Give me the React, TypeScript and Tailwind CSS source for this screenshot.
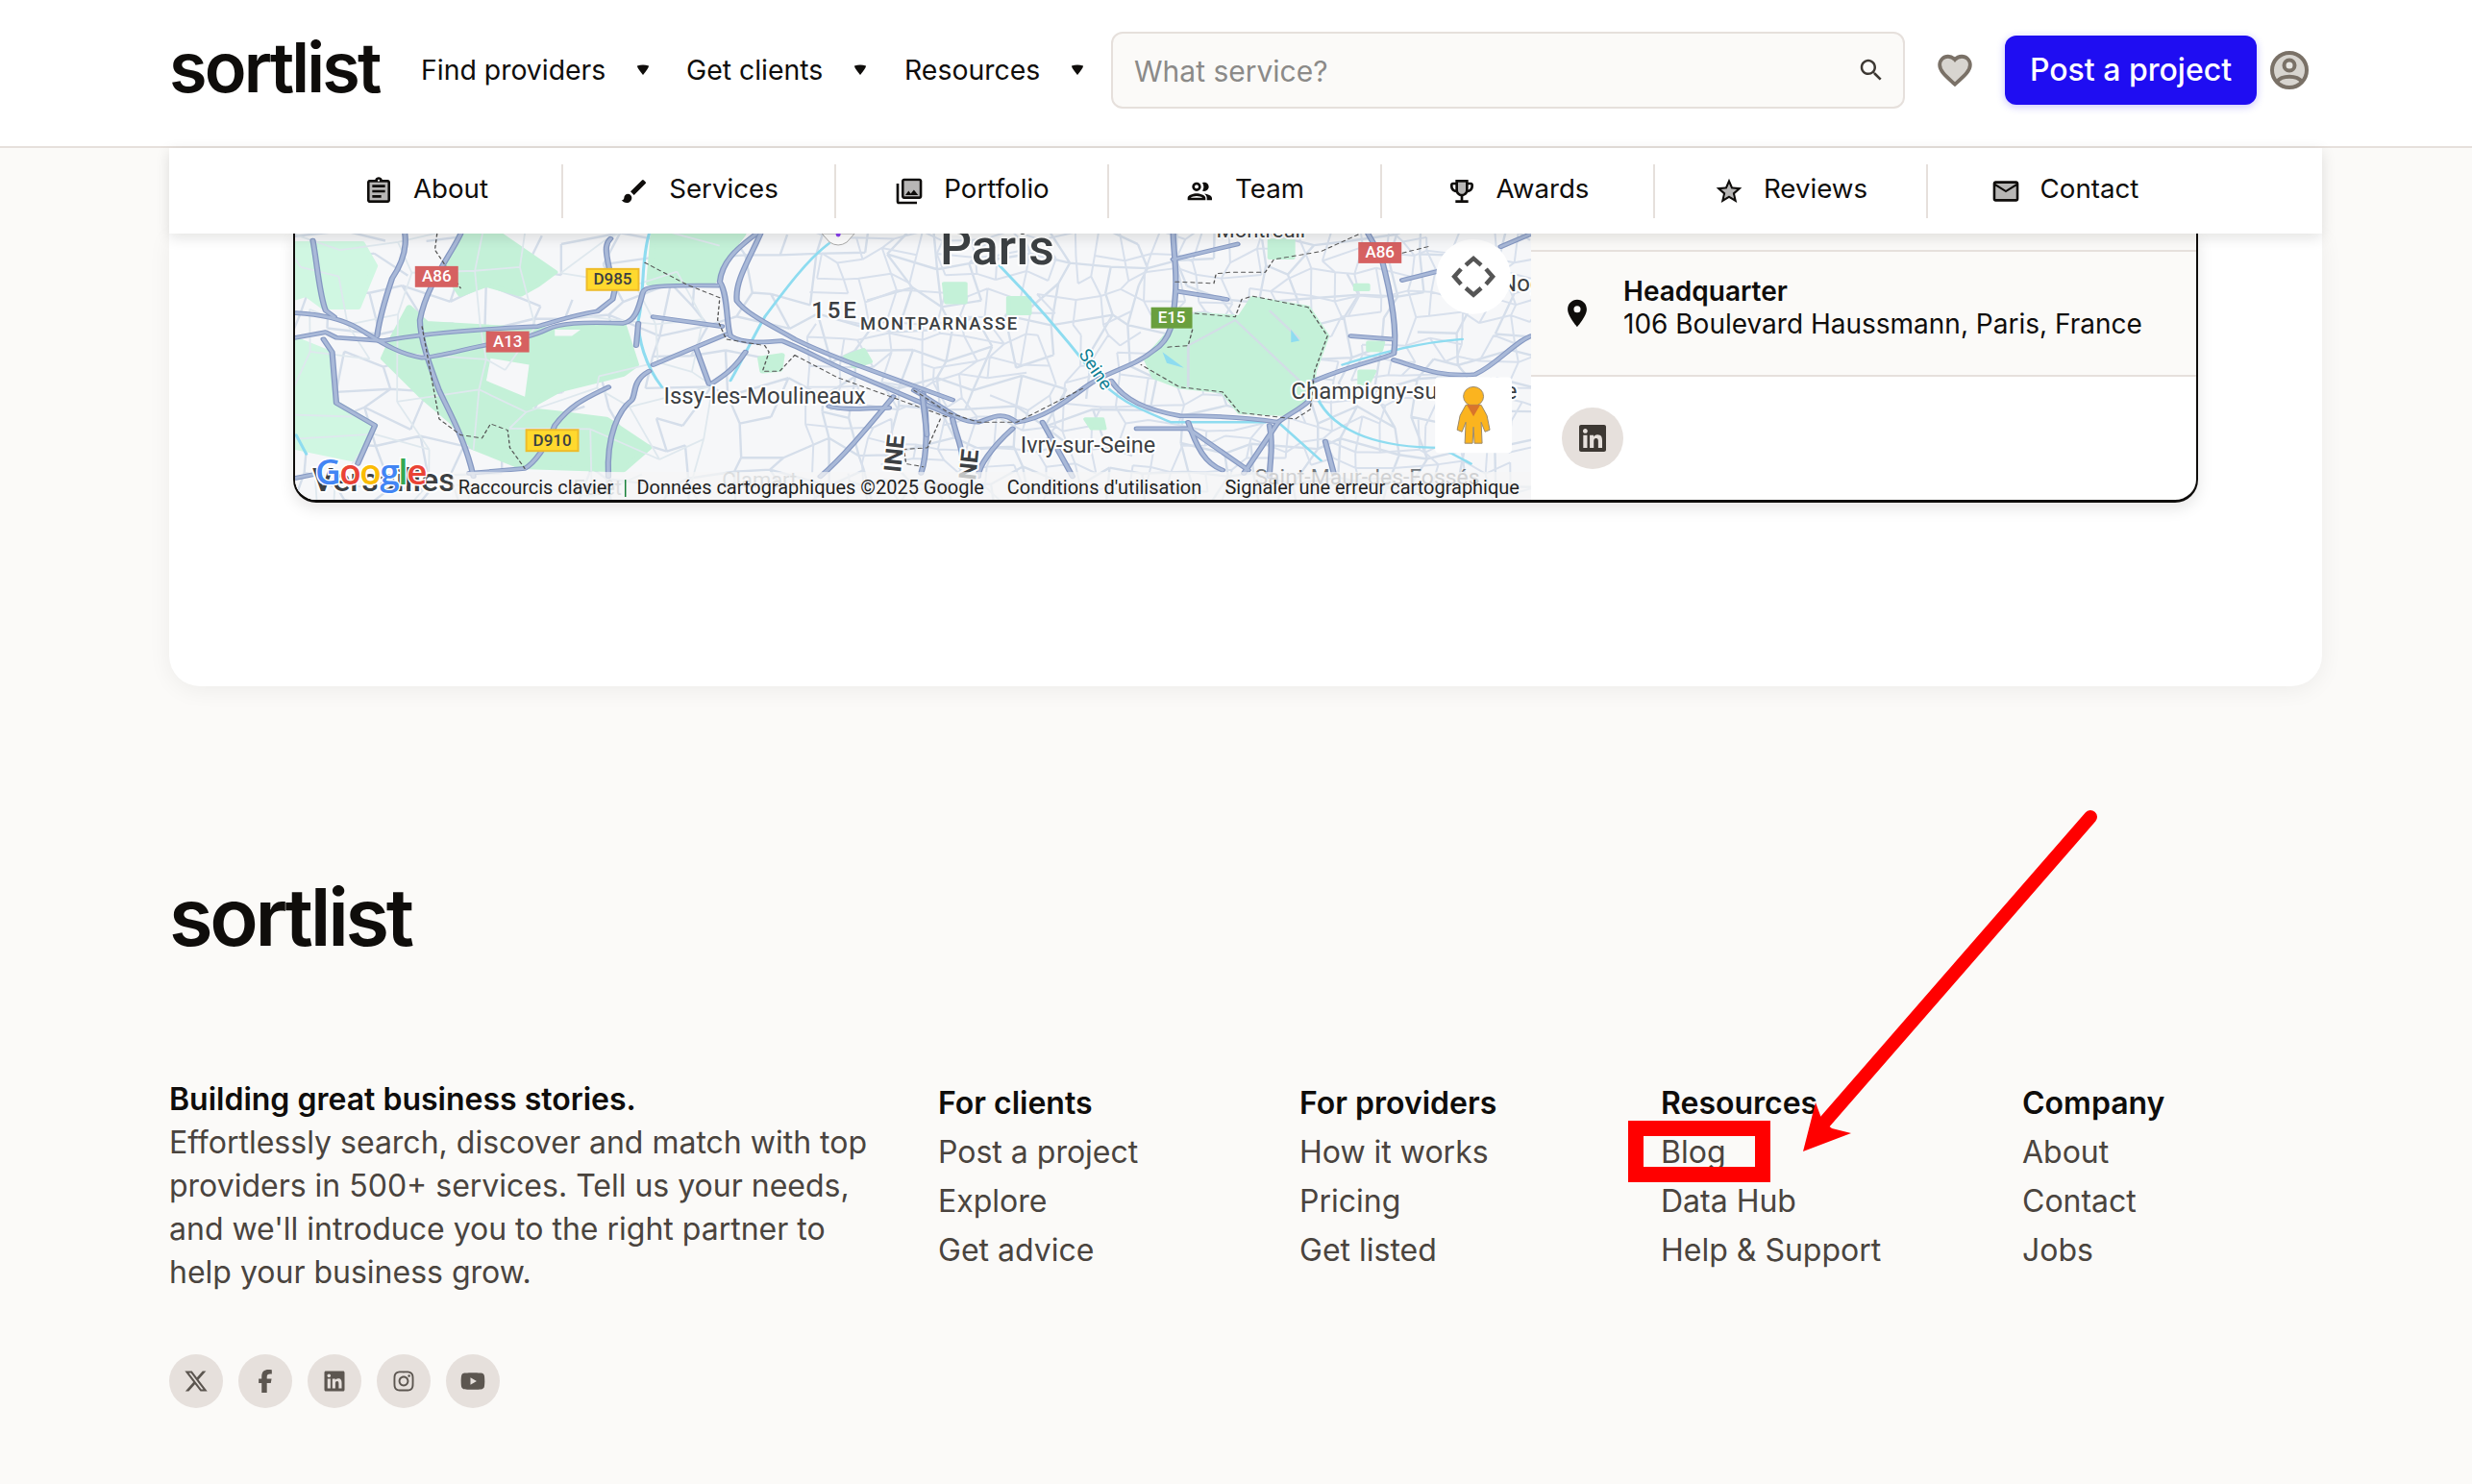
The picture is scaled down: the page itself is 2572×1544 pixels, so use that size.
import { FaFacebookF, FaInstagram, FaLinkedin, FaXTwitter, FaYoutube } from "react-icons/fa6";

const font = "font-['Inter',sans-serif]";

// minor street mesh of the map, jittered grid with a fixed seed
function streets(x0: number, x1: number, y0: number, y1: number, cw: number, ch: number, seed: number) {
  let s = seed;
  const rnd = () => {
    s = (s * 16807) % 2147483647;
    return s / 2147483647;
  };
  const cols = Math.ceil((x1 - x0) / cw);
  const rows = Math.ceil((y1 - y0) / ch);
  const pts: number[][][] = [];
  for (let c = 0; c <= cols; c++) {
    pts.push([]);
    for (let r = 0; r <= rows; r++) {
      pts[c].push([x0 + c * cw + (rnd() - 0.5) * cw * 0.8, y0 + r * ch + (rnd() - 0.5) * ch * 0.8]);
    }
  }
  let d = "";
  for (let c = 0; c <= cols; c++) {
    for (let r = 0; r <= rows; r++) {
      const p = pts[c][r];
      if (c < cols && rnd() > 0.22) d += `M${p[0].toFixed(1)},${p[1].toFixed(1)}L${pts[c + 1][r][0].toFixed(1)},${pts[c + 1][r][1].toFixed(1)}`;
      if (r < rows && rnd() > 0.28) d += `M${p[0].toFixed(1)},${p[1].toFixed(1)}L${pts[c][r + 1][0].toFixed(1)},${pts[c][r + 1][1].toFixed(1)}`;
    }
  }
  return d;
}

const minorWide = streets(0, 1288, 0, 278, 42, 32, 4711);
const minorDense = streets(540, 1290, 0, 278, 27, 22, 921);
const minorPark = streets(0, 380, 0, 278, 60, 44, 2207);

const westHighways = [
  "M35,258 C90,262 140,275 180,305 C230,345 270,385 330,398 C370,395 430,370 490,355 C540,345 590,330 620,310 C650,290 700,285 800,290 C825,285 835,250 845,195 C850,175 870,170 1020,172",
  "M35,335 L105,318 L130,335 L240,345 C300,330 400,312 600,300 C640,285 680,265 740,252 L775,215 L780,185",
  "M420,10 C400,70 340,170 325,280 C325,340 350,430 370,500 C390,560 430,650 450,770",
  "M75,30 C85,100 90,200 105,250 L125,270",
  "M100,340 L120,380 L130,540 L220,610 L180,730",
  "M1110,10 C1060,60 1030,100 1025,160 C1045,200 1040,300 1050,330 C1080,355 1130,350 1170,345 C1220,370 1270,410 1340,450 L1568,580",
  "M1120,10 C1090,100 1060,160 1065,220 C1090,265 1150,300 1200,340 C1260,380 1320,410 1568,530",
  "M870,270 L1030,300",
  "M870,420 L1040,325",
  "M970,370 L1000,480",
  "M1085,380 C1060,430 1040,450 1005,480",
  "M765,490 C720,520 680,540 640,610 C620,680 590,730 570,745 L440,760",
  "M860,440 C820,470 830,510 820,530 C790,560 760,640 765,770",
  "M1430,520 C1380,600 1320,700 1260,770",
  "M1500,510 C1510,600 1510,700 1495,760",
  "M1280,550 C1320,565 1370,555 1420,555",
  "M35,775 L90,760",
  "M835,290 L830,360",
  "M770,25 C750,50 765,90 775,175",
  "M290,10 C295,60 280,110 260,150 C240,230 230,280 225,330",
];

const eastHighways = [
  "M605,10 C605,60 615,130 610,200 C605,290 600,340 560,375 C510,430 450,440 400,490 C350,540 300,590 240,600 C200,560 180,590 150,600 C100,600 80,560 0,500",
  "M605,90 L755,42",
  "M615,190 L730,215",
  "M460,470 C490,530 540,560 620,580 C700,580 780,585 850,600 C880,570 900,560 920,535",
  "M520,620 L640,620 L780,750",
  "M640,600 C660,680 680,730 720,750",
  "M830,610 C840,680 830,720 830,770",
  "M850,600 L770,760",
  "M1090,80 C1110,180 1130,300 1120,385 C1100,400 1020,420 935,470",
  "M1120,405 C1180,430 1230,460 1310,450 C1360,420 1400,350 1440,330",
  "M1020,330 L1115,340",
  "M1140,155 L1230,125",
  "M1090,80 L1060,10",
  "M1370,50 L1440,10",
  "M960,660 L980,760",
  "M90,590 C100,650 120,700 110,740",
  "M230,620 C180,680 150,740 150,770",
  "M20,520 L30,640",
  "M300,600 L370,770",
];

function RoadBadge({ x, y, w, label, fill, color, border }: { x: number; y: number; w: number; label: string; fill: string; color: string; border?: string }) {
  return (
    <g>
      <rect x={x} y={y} width={w} height={22} fill={fill} stroke={border} strokeWidth={border ? 2 : 0} />
      <text x={x + w / 2} y={y + 16.5} textAnchor="middle" fontFamily="Roboto, sans-serif" fontSize="17" fontWeight="500" fill={color}>
        {label}
      </text>
    </g>
  );
}

function MapLabel({ x, y, size, children, weight = 400, fill = "#3c4043", spacing = 0 }: { x: number; y: number; size: number; children: string; weight?: number; fill?: string; spacing?: number }) {
  return (
    <text x={x} y={y} fontFamily="Roboto, sans-serif" fontSize={size} fontWeight={weight} fill={fill} letterSpacing={spacing} stroke="#ffffff" strokeWidth="4" strokeLinejoin="round" paintOrder="stroke">
      {children}
    </text>
  );
}

function MapDrawing() {
  return (
    <svg viewBox="0 0 1288 278" className="block h-full w-full" preserveAspectRatio="none">
      <rect width="1288" height="278" fill="#f6f7f9" />
      <path d={minorWide} fill="none" stroke="#d5deea" strokeWidth="2.4" />
      <path d={minorDense} fill="none" stroke="#d8e0ec" strokeWidth="2" />

      <g transform="translate(-15,-3) scale(0.4464,0.3333)">
        <g fill="#c4f1d8" stroke="#c4f1d8" strokeWidth="14" strokeLinejoin="round">
          <path fill="#d0f7e2" stroke="#d0f7e2" d="M36,40 L190,40 L220,110 L180,240 L100,240 L60,200 L36,210Z" />
          <path fill="#d0f7e2" stroke="#d0f7e2" d="M36,340 L110,380 L130,540 L220,610 L180,720 L36,680Z" />
          <path d="M420,10 L510,10 L640,130 L600,170 L560,200 L480,170 L420,200 L380,120Z" />
          <path d="M870,10 L1080,10 L1030,100 L1010,160 L860,165Z" />
          <path d="M300,240 L340,290 L600,310 L700,300 L800,295 L830,420 L800,450 L650,500 L570,560 L640,570 L760,590 L860,680 L800,750 L560,740 L450,680 L400,600 L330,520 L240,400 L260,340Z" />
          <path fill="#f6f7f9" stroke="none" d="M490,400 L580,420 L570,520 L480,470Z" />
          <path fill="#f6f7f9" stroke="none" d="M640,310 L700,310 L680,330 L640,330Z" />
          <path d="M1120,400 L1170,390 L1165,435 L1125,440Z" />
          <path d="M1320,395 L1360,375 L1375,410 L1340,425Z" />
        </g>
      </g>
      <path d={minorPark} fill="none" stroke="#dfe8ee" strokeWidth="1.8" />

      <g transform="translate(-15,-3) scale(0.4464,0.3333)">
        <g fill="none" stroke="#8edcf0" strokeWidth="7" strokeLinecap="round">
          <path d="M860,10 C840,100 850,200 835,280 C835,340 850,420 890,490" />
          <path d="M1280,40 C1230,90 1180,180 1130,270 C1100,340 1080,400 1050,470" />
          <path d="M36,640 L60,700" />
        </g>
        <g fill="none" strokeLinejoin="round" strokeLinecap="round">
          <g stroke="#8598c2">
            {westHighways.map((d) => (
              <path key={d} d={d} strokeWidth="14" />
            ))}
          </g>
          <g stroke="#a9b9d8">
            {westHighways.map((d) => (
              <path key={d} d={d} strokeWidth="8" />
            ))}
          </g>
          <g stroke="#555555" strokeWidth="3" strokeDasharray="9 9">
            <path d="M365,10 L360,60 L420,180" />
            <path d="M850,100 L950,170 L1025,210 L1020,280 L1040,340 L1130,360 L1140,380 L1125,440 L1165,440 L1200,390" />
            <path d="M330,300 L370,590 L420,640 L470,650 L490,605 L530,625 L535,680 L570,745" />
            <path d="M1200,390 L1300,460 L1568,590" />
            <path d="M1540,590 L1510,680 L1455,685 L1460,730 L1500,740" />
          </g>
        </g>
      </g>

      <g transform="translate(645,-3) scale(0.4464,0.3333)">
        <g fill="#c4f1d8" stroke="#c4f1d8" strokeWidth="10" strokeLinejoin="round">
          <path d="M540,400 L600,310 L660,260 L760,270 L790,210 L920,240 L965,330 L935,440 L925,530 L860,575 L760,570 L720,505 L620,490 L560,460Z" />
          <path d="M70,165 L120,165 L120,225 L75,225Z" />
          <path d="M220,210 L270,210 L270,260 L220,260Z" />
          <path d="M830,30 L885,30 L885,85 L830,85Z" />
          <path d="M1030,170 L1060,170 L1060,185 L1030,185Z" />
          <path d="M1060,350 L1095,350 L1090,375 L1060,375Z" />
          <path d="M1040,440 L1075,440 L1060,480 L1040,480Z" />
          <path d="M400,590 L440,590 L445,620 L415,620Z" />
        </g>
        <g fill="none" stroke="#d3dde6" strokeWidth="6">
          <path d="M640,360 L640,490" />
          <path d="M640,360 L750,280 L900,470" />
          <path d="M830,250 L900,340" />
        </g>
        <g fill="none" stroke="#8edcf0" strokeWidth="7" strokeLinecap="round">
          <path d="M200,110 C280,220 350,330 420,450 C480,540 530,560 600,600 L820,600" />
          <path d="M850,600 L950,720" />
          <path d="M940,520 C980,640 1100,680 1230,680 L1300,730" />
          <path d="M1000,420 C1100,380 1180,350 1280,340" />
        </g>
        <path d="M880,310 L900,345 L880,350Z" fill="#8edcf0" />
        <path d="M580,380 L630,430 L590,415Z" fill="#8edcf0" />
        <g fill="none" strokeLinejoin="round" strokeLinecap="round">
          <g stroke="#8598c2">
            {eastHighways.map((d) => (
              <path key={d} d={d} strokeWidth="14" />
            ))}
          </g>
          <g stroke="#a9b9d8">
            {eastHighways.map((d) => (
              <path key={d} d={d} strokeWidth="8" />
            ))}
          </g>
          <g stroke="#555555" strokeWidth="3" strokeDasharray="9 9">
            <path d="M610,160 L700,165 L705,135 L740,130 L820,130 L840,90 L950,65 L1040,10" />
            <path d="M620,255 L750,270 L765,215 L790,205 L920,240 L965,330 L935,440 L925,560 L890,590 L760,570 L720,505 L620,490 L530,420" />
            <path d="M650,310 L640,360 L590,365" />
            <path d="M1200,50 L1140,70" />
            <path d="M0,500 L80,570 L150,600 L240,600 L400,490" />
          </g>
        </g>
      </g>

      <path d="M549,0 h34 l-8,9 q-9,6 -18,0Z" fill="#ffffff" stroke="#aaaaaa" strokeWidth="1" />
      <circle cx="566" cy="1" r="2.5" fill="#8a3ff0" />

      <RoadBadge x={125} y={34} w={45} label="A86" fill="#d66161" color="#ffffff" />
      <RoadBadge x={304} y={37} w={54} label="D985" fill="#ffd92e" color="#3c4043" border="#eebc2a" />
      <RoadBadge x={199} y={102} w={45} label="A13" fill="#d66161" color="#ffffff" />
      <RoadBadge x={241} y={205} w={54} label="D910" fill="#ffd92e" color="#3c4043" border="#eebc2a" />
      <RoadBadge x={1108} y={9} w={45} label="A86" fill="#d66161" color="#ffffff" />
      <RoadBadge x={892} y={77} w={43} label="E15" fill="#6a9f3e" color="#ffffff" />

      <MapLabel x={672} y={32} size={52} weight={500}>Paris</MapLabel>
      <MapLabel x={960} y={4} size={22}>Montreuil</MapLabel>
      <MapLabel x={538} y={88} size={24} weight={500} spacing={3}>15E</MapLabel>
      <MapLabel x={589} y={100} size={18.5} weight={500} spacing={1.6}>MONTPARNASSE</MapLabel>
      <MapLabel x={384} y={178} size={24}>Issy-les-Moulineaux</MapLabel>
      <MapLabel x={756} y={229} size={23.5}>Ivry-sur-Seine</MapLabel>
      <MapLabel x={1038} y={173} size={24}>Champigny-sur-Marne</MapLabel>
      <MapLabel x={1256} y={60} size={24}>Nogent</MapLabel>
      <g transform="translate(631,250) rotate(-84)">
        <MapLabel x={0} y={0} size={25} weight={700}>INE</MapLabel>
      </g>
      <g transform="translate(709,258) rotate(-84)">
        <MapLabel x={0} y={0} size={25} weight={700}>NE</MapLabel>
      </g>
      <g transform="translate(816,126) rotate(56)">
        <text fontFamily="Roboto, sans-serif" fontSize="19" fill="#0e7f94" stroke="#ffffff" strokeWidth="3" paintOrder="stroke">Seine</text>
      </g>
      <MapLabel x={18} y={269} size={34} weight={500}>Versailles</MapLabel>

      <text x={21} y={262} fontFamily="'Open Sans', sans-serif" fontSize="37" fontWeight="600" stroke="#ffffff" strokeWidth="3" paintOrder="stroke" letterSpacing="-1.5">
        <tspan fill="#4285f4">G</tspan>
        <tspan fill="#ea4335">o</tspan>
        <tspan fill="#fbbc05">o</tspan>
        <tspan fill="#4285f4">g</tspan>
        <tspan fill="#34a853">l</tspan>
        <tspan fill="#ea4335">e</tspan>
      </text>

      <text x={290} y={273} fontFamily="Roboto, sans-serif" fontSize="22" fill="#9aa0a6">Forêt</text>
      <text x={445} y={265} fontFamily="Roboto, sans-serif" fontSize="22" fill="#9aa0a6">Clamart</text>
      <text x={1000} y={262} fontFamily="Roboto, sans-serif" fontSize="23" fill="#70757a">Saint-Maur-des-Fossés</text>
      <rect x="164" y="249" width="1124" height="29" fill="#f5f5f5" fillOpacity="0.72" />
      <g fontFamily="Roboto, sans-serif" fontSize="20" fill="#1f1f1f">
        <text x={170} y={272}>Raccourcis clavier</text>
        <text x={356} y={272}>Données cartographiques ©2025 Google</text>
        <text x={742} y={272}>Conditions d'utilisation</text>
        <text x={969} y={272}>Signaler une erreur cartographique</text>
      </g>
      <rect x="343.5" y="257" width="1.5" height="18" fill="#188038" />

      <circle cx="1228" cy="45" r="39" fill="#ffffff" />
      <g fill="none" stroke="#555555" strokeWidth="4.5">
        <path d="M1220,33 L1228,26 L1236,33" />
        <path d="M1220,57 L1228,64 L1236,57" />
        <path d="M1215,37 L1208,45 L1215,53" />
        <path d="M1241,37 L1248,45 L1241,53" />
      </g>
      <rect x="1188" y="150" width="80" height="79" rx="4" fill="#ffffff" />
      <g stroke="#9b8a6c" strokeWidth="1">
        <ellipse cx="1228" cy="170" rx="10.5" ry="10" fill="#fbb41f" />
        <path d="M1220,179 L1236,179 L1242,190 L1245,205 L1240,207 L1236,197 L1237,219 L1229,219 L1228,202 L1227,219 L1219,219 L1220,197 L1216,207 L1211,205 L1214,190Z" fill="#fbb41f" />
      </g>
      <path d="M1221,179 L1235,179 L1228,191Z" fill="#d9742b" />
    </svg>
  );
}

const Glyph = ({ className, children }: { className: string; children: React.ReactNode }) => (
  <svg viewBox="0 0 24 24" className={className} fill="currentColor">
    {children}
  </svg>
);

const subNav = [
  {
    label: "About",
    icon: (
      <>
        <path d="M5 5h14v14H5z" opacity=".3" />
        <path d="M7 15h7v2H7zm0-4h10v2H7zm0-4h10v2H7zm12-4h-4.18C14.4 1.84 13.3 1 12 1s-2.4.84-2.82 2H5c-.14 0-.27.01-.4.04-.39.08-.74.28-1.01.55-.18.18-.33.4-.43.64-.1.23-.16.49-.16.77v14c0 .27.06.54.16.78s.25.45.43.64c.27.27.62.47 1.01.55.13.02.26.03.4.03h14c1.1 0 2-.9 2-2V5c0-1.1-.9-2-2-2zm-7-.25c.41 0 .75.34.75.75s-.34.75-.75.75-.75-.34-.75-.75.34-.75.75-.75zM19 19H5V5h14v14z" />
      </>
    ),
  },
  {
    label: "Services",
    icon: <path d="M7 14c-1.66 0-3 1.34-3 3 0 1.31-1.16 2-2 2 .92 1.22 2.49 2 4 2 2.21 0 4-1.79 4-4 0-1.66-1.34-3-3-3zm13.71-9.37l-1.34-1.34a.9959.9959 0 0 0-1.41 0L9 12.25 11.75 15l8.96-8.96c.39-.39.39-1.02 0-1.41z" />,
  },
  {
    label: "Portfolio",
    icon: (
      <>
        <path d="M8 4h12v12H8z" opacity=".3" />
        <path d="M20 4v12H8V4h12m0-2H8c-1.1 0-2 .9-2 2v12c0 1.1.9 2 2 2h12c1.1 0 2-.9 2-2V4c0-1.1-.9-2-2-2zm-8.5 9.67l1.69 2.26 2.48-3.1L19 15H9zM2 6v14c0 1.1.9 2 2 2h14v-2H4V6H2z" />
      </>
    ),
  },
  {
    label: "Team",
    icon: (
      <>
        <path d="M9 12c1.93 0 3.5-1.57 3.5-3.5S10.93 5 9 5 5.5 6.57 5.5 8.5 7.07 12 9 12zm0-5c.83 0 1.5.67 1.5 1.5S9.83 10 9 10s-1.5-.67-1.5-1.5S8.17 7 9 7zm0 6.75c-2.34 0-7 1.17-7 3.5V19h14v-1.75c0-2.33-4.66-3.5-7-3.5zM4.34 17c.84-.58 2.87-1.25 4.66-1.25s3.82.67 4.66 1.25H4.34zM15.04 13.81c1.16.84 1.96 1.96 1.96 3.44V19h4v-1.75c0-2.02-3.5-3.17-5.96-3.44zM15 12c1.93 0 3.5-1.57 3.5-3.5S16.93 5 15 5c-.54 0-1.04.13-1.5.35.63.89 1 1.98 1 3.15s-.37 2.26-1 3.15c.46.22.96.35 1.5.35z" />
      </>
    ),
  },
  {
    label: "Awards",
    icon: (
      <>
        <path d="M12 14c-1.65 0-3-1.35-3-3V5h6v6c0 1.65-1.35 3-3 3z" opacity=".3" />
        <path d="M19 5h-2V3H7v2H5c-1.1 0-2 .9-2 2v1c0 2.55 1.92 4.63 4.39 4.94.63 1.5 1.98 2.63 3.61 2.96V19H7v2h10v-2h-4v-3.1c1.63-.33 2.98-1.46 3.61-2.96C19.08 12.63 21 10.55 21 8V7c0-1.1-.9-2-2-2zM5 8V7h2v3.82C5.84 10.4 5 9.3 5 8zm7 6c-1.65 0-3-1.35-3-3V5h6v6c0 1.65-1.35 3-3 3zm7-6c0 1.3-.84 2.4-2 2.82V7h2v1z" />
      </>
    ),
  },
  {
    label: "Reviews",
    icon: (
      <>
        <path d="M12 15.4l-3.76 2.27 1-4.28-3.32-2.88 4.38-.38L12 6.1l1.71 4.04 4.38.38-3.32 2.88 1 4.28L12 15.4z" opacity=".3" />
        <path d="M22 9.24l-7.19-.62L12 2 9.19 8.63 2 9.24l5.46 4.73L5.82 21 12 17.27 18.18 21l-1.63-7.03L22 9.24zM12 15.4l-3.76 2.27 1-4.28-3.32-2.88 4.38-.38L12 6.1l1.71 4.04 4.38.38-3.32 2.88 1 4.28L12 15.4z" />
      </>
    ),
  },
  {
    label: "Contact",
    icon: (
      <>
        <path d="M20 6H4l8 5 8-5zm0 12H4V8l8 5 8-5v10z" opacity=".3" />
        <path d="M22 6c0-1.1-.9-2-2-2H4c-1.1 0-2 .9-2 2v12c0 1.1.9 2 2 2h16c1.1 0 2-.9 2-2V6zm-2 0l-8 5-8-5h16zm0 12H4V8l8 5 8-5v10z" />
      </>
    ),
  },
];

const topNav = ["Find providers", "Get clients", "Resources"];

const footerCols = [
  { title: "For clients", links: ["Post a project", "Explore", "Get advice"] },
  { title: "For providers", links: ["How it works", "Pricing", "Get listed"] },
  { title: "Resources", links: ["Blog", "Data Hub", "Help & Support"] },
  { title: "Company", links: ["About", "Contact", "Jobs"] },
];

function Caret() {
  return (
    <svg viewBox="0 0 14 12" className="h-3 w-[14px] text-[#0f0d0b]" fill="currentColor">
      <path d="M1,1.5 Q7,-0.5 13,1.5 Q13.5,3 7,11 Q0.5,3 1,1.5Z" />
    </svg>
  );
}

export default function App() {
  return (
    <div className={`relative h-[1544px] overflow-hidden bg-[#fbfaf8] text-[#0f0d0b] ${font}`}>
      {/* top bar */}
      <header className="flex h-[154px] items-center border-b-2 border-[#e6e0dc] bg-white pb-[6px] pl-[176px]">
        <span className="mb-[7px] w-[262px] text-[72px] leading-none font-semibold tracking-[-0.04em]">sortlist</span>
        <nav className="flex text-[28.4px]">
          <div className="flex w-[276px] items-center gap-[32px]">
            <span>{topNav[0]}</span>
            <Caret />
          </div>
          <div className="flex w-[227px] items-center gap-[32px]">
            <span>{topNav[1]}</span>
            <Caret />
          </div>
          <div className="flex w-[215px] items-center gap-[32px]">
            <span>{topNav[2]}</span>
            <Caret />
          </div>
        </nav>
        <div className="flex h-[80px] w-[826px] items-center justify-between rounded-xl border-2 border-[#e6e0dc] bg-[#fbfaf8] pr-[18px] pl-[22px]">
          <span className="pt-[3px] text-[30px] text-[#8b8a88]">What service?</span>
          <Glyph className="h-[30px] w-[30px] text-[#3d3833]">
            <path d="M15.5 14h-.79l-.28-.27C15.41 12.59 16 11.11 16 9.5 16 5.91 13.09 3 9.5 3S3 5.91 3 9.5 5.91 16 9.5 16c1.61 0 3.09-.59 4.23-1.57l.27.28v.79l5 4.99L20.49 19l-4.99-5zm-6 0C7.01 14 5 11.99 5 9.5S7.01 5 9.5 5 14 7.01 14 9.5 11.99 14 9.5 14z" />
          </Glyph>
        </div>
        <svg viewBox="0 0 24 24" className="mx-[33px] h-[40px] w-[38px]" fill="#d8d5d0" stroke="#7a7167" strokeWidth="2.4">
          <path d="M16.5 3c-1.74 0-3.41.81-4.5 2.09C10.91 3.81 9.24 3 7.5 3 4.42 3 2 5.42 2 8.5c0 3.78 3.4 6.86 8.55 11.54L12 21.35l1.45-1.32C18.6 15.36 22 12.28 22 8.5 22 5.42 19.58 3 16.5 3z" />
        </svg>
        <button className="h-[72px] w-[262px] rounded-xl bg-[#1f0df2] text-[32px] font-medium text-white shadow-[0_2px_8px_rgba(31,13,242,0.25)]">Post a project</button>
        <svg viewBox="0 0 40 40" className="ml-[14px] h-[40px] w-[40px]" fill="none" stroke="#7a7167" strokeWidth="4">
          <circle cx="20" cy="20" r="18" fill="#d8d5d0" />
          <circle cx="20" cy="15" r="5.5" fill="#e8e6e2" />
          <path d="M7,32 C12,25 28,25 33,32" />
        </svg>
      </header>

      <main className="ml-[176px] w-[2240px]">
        {/* section tabs */}
        <nav className="relative z-10 flex h-[89px] items-center justify-center bg-white shadow-[0_4px_14px_rgba(15,13,11,0.12)]">
          {subNav.map((item, i) => (
            <div key={item.label} className={`flex h-[56px] w-[284px] items-center justify-center gap-[20px] text-[27.7px] ${i < subNav.length - 1 ? "border-r-2 border-[#e6e0dc]" : ""}`}>
              <Glyph className="h-[32px] w-[32px]">{item.icon}</Glyph>
              <span className="pb-[3px]">{item.label}</span>
            </div>
          ))}
        </nav>

        <section className="h-[471px] rounded-b-[32px] bg-white pl-[129px] shadow-[0_4px_24px_rgba(15,13,11,0.06)]">
          <div className="flex h-[280px] w-[1982px] overflow-hidden rounded-b-[24px] border-x-2 border-b-[3px] border-[#0f0d0b] shadow-[0_6px_16px_rgba(15,13,11,0.1)]">
            <div className="h-full w-[1286px] shrink-0">
              <MapDrawing />
            </div>
            <div className="flex flex-1 flex-col">
              <div className="h-[19px] shrink-0 border-b-2 border-[#e6e0dc] bg-[#fbfaf8]" />
              <div className="flex h-[130px] shrink-0 items-center border-b-2 border-[#e6e0dc] bg-[#fbfaf8] pl-[31px]">
                <Glyph className="h-[34px] w-[34px] shrink-0">
                  <path d="M12 2C8.13 2 5 5.13 5 9c0 5.25 7 13 7 13s7-7.75 7-13c0-3.87-3.13-7-7-7zm0 9.5a2.5 2.5 0 0 1 0-5 2.5 2.5 0 0 1 0 5z" />
                </Glyph>
                <div className="mb-[12px] ml-[31px] text-[28px] leading-[34px]">
                  <div className="font-semibold">Headquarter</div>
                  <div>106 Boulevard Haussmann, Paris, France</div>
                </div>
              </div>
              <div className="flex flex-1 items-center pl-[32px]">
                <div className="flex h-[64px] w-[64px] items-center justify-center rounded-full bg-[#e6e0dc] text-[#3d3833]">
                  <FaLinkedin size={32} />
                </div>
              </div>
            </div>
          </div>
        </section>

        <footer className="pt-[205px]">
          <div className="h-[90px] text-[83px] leading-[70px] font-semibold tracking-[-0.04em]">sortlist</div>
          <div className="mt-[113px] flex">
            <div className="w-[800px] shrink-0">
              <div className="w-[750px] text-[32px] text-[#4a443e]">
                <strong className="block leading-[44px] font-semibold text-[#0f0d0b]">Building great business stories.</strong>
                <p className="leading-[45px]">Effortlessly search, discover and match with top providers in 500+ services. Tell us your needs, and we'll introduce you to the right partner to help your business grow.</p>
              </div>
              <div className="mt-[63px] flex gap-4 text-[#5c5650]">
                <span className="flex h-14 w-14 items-center justify-center rounded-full bg-[#e6e0dc]"><FaXTwitter size={26} /></span>
                <span className="flex h-14 w-14 items-center justify-center rounded-full bg-[#e6e0dc]"><FaFacebookF size={24} /></span>
                <span className="flex h-14 w-14 items-center justify-center rounded-full bg-[#e6e0dc]"><FaLinkedin size={24} /></span>
                <span className="flex h-14 w-14 items-center justify-center rounded-full bg-[#e6e0dc]"><FaInstagram size={24} /></span>
                <span className="flex h-14 w-14 items-center justify-center rounded-full bg-[#e6e0dc]"><FaYoutube size={26} /></span>
              </div>
            </div>
            {footerCols.map((col) => (
              <div key={col.title} className="mt-[8px] w-[376px] shrink-0 text-[32px]">
                <div className="mb-[7px] h-[36px] leading-[36px] font-semibold">{col.title}</div>
                {col.links.map((l) => (
                  <div key={l} className="h-[51px] leading-[51px] text-[#4a443e]">{l}</div>
                ))}
              </div>
            ))}
          </div>
        </footer>
      </main>

      {/* annotation drawn over the page */}
      <div className="absolute top-[1166px] left-[1694px] h-[64px] w-[148px] border-16 border-[#ff0000]" />
      <svg className="absolute top-0 left-0 h-[1544px] w-[2572px]" viewBox="0 0 2572 1544" fill="none">
        <path d="M2175,850 L1898,1168" stroke="#ff0000" strokeWidth="14" strokeLinecap="round" />
        <path d="M1876,1198 L1889,1147 L1896,1166 L1906,1174 L1926,1179Z" fill="#ff0000" />
      </svg>
    </div>
  );
}
